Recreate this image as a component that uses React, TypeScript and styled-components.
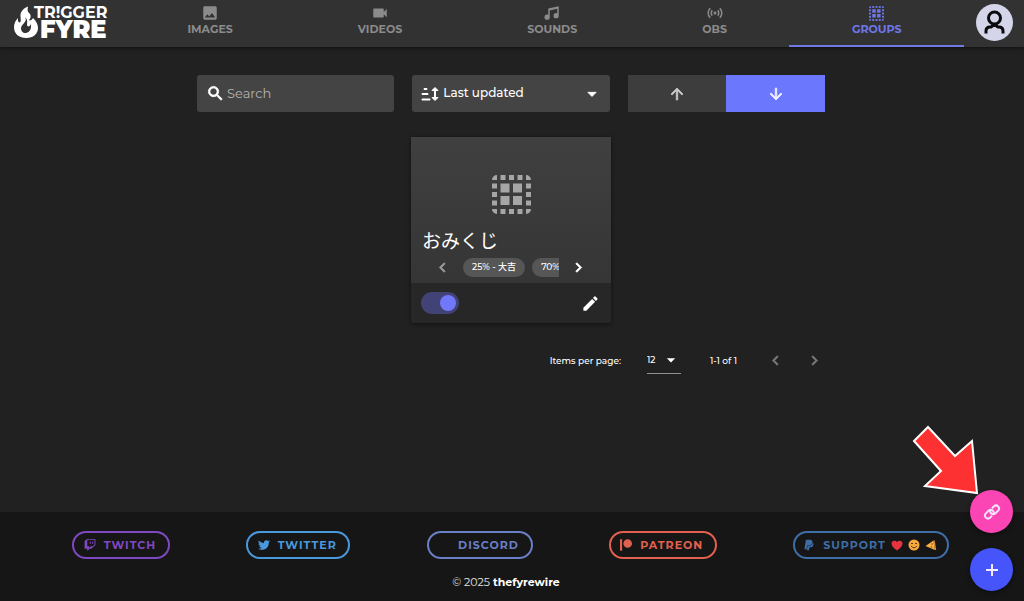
import React from "react";
import styled, { createGlobalStyle, css } from "styled-components";
import { FaTwitch, FaTwitter, FaPatreon, FaPaypal } from "react-icons/fa";
import {
  MdImage,
  MdVideocam,
  MdSensors,
  MdSearch,
  MdArrowUpward,
  MdArrowDownward,
  MdArrowDropDown,
  MdChevronLeft,
  MdChevronRight,
  MdEdit,
  MdAdd,
} from "react-icons/md";

const GlobalStyle = createGlobalStyle`
  * { box-sizing: border-box; }
  body {
    margin: 0;
    background: #212121;
    color: #fff;
    font-family: Montserrat, Inter, "Noto Sans CJK JP", sans-serif;
    font-size: 12px;
  }
  button, input, select { font: inherit; color: inherit; border: 0; margin: 0; }
  button { cursor: pointer; padding: 0; background: none; }
  a { text-decoration: none; color: inherit; }
`;

const heavyGlyph = css`
  path:not([fill="none"]) {
    stroke: currentColor;
    stroke-width: 1px;
  }
`;

const Page = styled.div`
  min-height: 100vh;
  display: flex;
  flex-direction: column;
`;

const Header = styled.header`
  display: flex;
  height: 47px;
  background: #323232;
  box-shadow: 0 1px 4px rgba(0, 0, 0, 0.6);
`;

const Logo = styled.a`
  width: 125px;
  padding: 4px 0 0 13px;
`;

const Tabs = styled.nav`
  flex: 1;
  display: flex;
`;

const Tab = styled.a<{ $active?: boolean }>`
  flex: 1 1 auto;
  display: flex;
  flex-direction: column;
  align-items: center;
  padding-top: 4px;
  font-size: 11px;
  line-height: 14px;
  font-weight: 700;
  color: ${(p) => (p.$active ? "#6f76e8" : "#8b8b8b")};
  border-bottom: 2px solid ${(p) => (p.$active ? "#6f79e6" : "transparent")};
`;

const TabIcon = styled.span<{ $small?: boolean }>`
  display: flex;
  align-items: center;
  justify-content: center;
  width: 18px;
  height: 18px;
  svg { width: ${(p) => (p.$small ? 15 : 18)}px; height: ${(p) => (p.$small ? 15 : 18)}px; }
`;

const AvatarButton = styled.button`
  width: 60px;
  display: flex;
  justify-content: center;
  padding-top: 4px;
`;

const Main = styled.main`
  flex: 1;
  padding: 28px 18px 24px 16px;
`;

const Content = styled.div`
  max-width: 628px;
  margin: 0 auto;
`;

const Controls = styled.div`
  display: grid;
  grid-template-columns: repeat(3, minmax(0, 1fr));
  gap: 18px;
  height: 37px;
`;

const Field = styled.label`
  position: relative;
  display: flex;
  align-items: center;
  background: #444;
  border-radius: 3px;
  padding-left: 9px;
  ${heavyGlyph}
`;

const SearchInput = styled.input`
  flex: 1;
  min-width: 0;
  height: 100%;
  padding: 0 3px 2px 2px;
  background: transparent;
  outline: none;
  font-size: 13px;
  &::placeholder { color: #b4b4b4; opacity: 1; }
`;

const SortSelect = styled.select`
  flex: 1;
  min-width: 0;
  height: 100%;
  padding: 0 28px 2px 4px;
  background: transparent;
  appearance: none;
  outline: none;
  font-weight: 500;
`;

const Caret = styled(MdArrowDropDown)<{ $inset: number }>`
  position: absolute;
  right: ${(p) => p.$inset}px;
  width: 20px;
  height: 20px;
  pointer-events: none;
`;

const Direction = styled.div`
  display: flex;
`;

const DirectionButton = styled.button<{ $on?: boolean }>`
  flex: 1;
  display: flex;
  align-items: center;
  justify-content: center;
  background: ${(p) => (p.$on ? "#6b77fd" : "#3d3d3d")};
  color: ${(p) => (p.$on ? "#f0f0ff" : "#c9c9c9")};
  svg { width: 18px; height: 18px; }
  ${heavyGlyph}
`;

const Card = styled.article`
  width: 200px;
  margin: 25px auto 0;
  border-radius: 2px;
  background: #272727;
  box-shadow: 0 1px 4px rgba(0, 0, 0, 0.5);
`;

const CardMedia = styled.div`
  display: flex;
  flex-direction: column;
  height: 146px;
  padding-top: 38px;
  background: linear-gradient(#404040, #353535);
`;

const CardIcon = styled.div`
  display: flex;
  justify-content: center;
  height: 39px;
  color: #a6a6a6;
  svg { width: 39px; height: 39px; }
`;

const CardTitle = styled.h2`
  margin: 13px 0 0;
  padding-left: 11px;
  font: 400 19px/26px "Noto Sans CJK JP", sans-serif;
`;

const ChipRow = styled.div`
  display: flex;
  align-items: center;
  margin-top: 5px;
  padding: 0 23px 0 22px;
`;

const ChevronButton = styled.button<{ $dim?: boolean }>`
  display: flex;
  color: ${(p) => (p.$dim ? "#999" : "#fff")};
  svg { width: 19px; height: 19px; }
  ${heavyGlyph}
`;

const Chips = styled.div`
  flex: 1;
  display: flex;
  gap: 7px;
  margin: 0 10px 0 11px;
  overflow: hidden;
`;

const Chip = styled.span`
  flex: none;
  height: 19px;
  padding: 0 9px;
  border-radius: 10px;
  background: #565656;
  font-size: 9px;
  line-height: 18px;
  font-weight: 500;
  white-space: nowrap;
`;

const CardActions = styled.div`
  display: flex;
  align-items: center;
  justify-content: space-between;
  height: 40px;
  padding: 0 11px 0 10px;
`;

const Toggle = styled.input`
  appearance: none;
  width: 38px;
  height: 22px;
  margin: 0;
  padding: 3px;
  border-radius: 11px;
  background: #414275;
  display: flex;
  &::before {
    content: "";
    width: 16px;
    height: 16px;
    border-radius: 50%;
    background: #7278fa;
  }
  &:checked { justify-content: flex-end; }
`;

const EditButton = styled.button`
  display: flex;
  svg { width: 19px; height: 19px; }
`;

const Paginator = styled.div`
  display: flex;
  align-items: center;
  justify-content: flex-end;
  height: 28px;
  margin-top: 23px;
  font-size: 9px;
  font-weight: 500;
`;

const PageSize = styled.label`
  display: flex;
  align-items: center;
  gap: 26px;
`;

const PageSizeBox = styled.span`
  position: relative;
  display: flex;
  align-items: center;
  width: 34px;
  height: 28px;
  border-bottom: 1px solid #909090;
`;

const PageSizeSelect = styled.select`
  width: 100%;
  height: 28px;
  padding: 0;
  background: transparent;
  appearance: none;
  outline: none;
`;

const Range = styled.span`
  width: 28px;
  margin: 0 28px 0 29px;
  white-space: nowrap;
`;

const PagerButtons = styled.div`
  display: flex;
  gap: 20px;
  margin-right: 1px;
  svg { color: #777; }
`;

const Footer = styled.footer`
  height: 89px;
  padding: 19px 75px 0 72px;
  background: #161616;
`;

const Links = styled.div`
  display: flex;
  justify-content: space-between;
`;

const Pill = styled.a<{ $color: string; $width: number }>`
  display: flex;
  align-items: center;
  justify-content: center;
  gap: 8px;
  min-width: ${(p) => p.$width}px;
  height: 28px;
  padding-right: 2px;
  border: 2px solid ${(p) => p.$color};
  border-radius: 14px;
  color: ${(p) => p.$color};
  font-size: 11px;
  font-weight: 700;
  letter-spacing: 1px;
  white-space: nowrap;
  > svg { width: 12px; height: 12px; }
`;

const BlankIcon = styled.span`
  width: 12px;
`;

const Emojis = styled.span`
  display: flex;
  gap: 5px;
  margin-left: -3px;
  svg { width: 12px; height: 12px; }
`;

const Copyright = styled.p`
  margin: 15px 9px 0 0;
  text-align: center;
  font-size: 11px;
  line-height: 16px;
  color: #e4e4e4;
  a { font-weight: 700; color: #fff; }
`;

const FloatingActions = styled.div`
  position: fixed;
  right: 11px;
  bottom: 10px;
  display: flex;
  flex-direction: column;
  gap: 15px;
`;

const Fab = styled.button<{ $color: string }>`
  display: flex;
  align-items: center;
  justify-content: center;
  width: 43px;
  height: 43px;
  border-radius: 50%;
  background: ${(p) => p.$color};
  color: #f4eaff;
  box-shadow: 0 2px 5px rgba(0, 0, 0, 0.4);
  svg { width: 18px; height: 18px; }
`;

const Pointer = styled.svg`
  position: fixed;
  right: 43px;
  bottom: 103px;
  width: 72px;
  height: 74px;
  pointer-events: none;
`;

const logoText = css`
  font-family: Montserrat, Inter, sans-serif;
  fill: #fff;
`;

const LogoTop = styled.text`
  ${logoText}
  font-size: 16px;
  font-weight: 700;
`;

const LogoBottom = styled.text`
  ${logoText}
  font-size: 24px;
  font-weight: 900;
`;

function LogoMark() {
  return (
    <svg width="100" height="43" viewBox="0 0 100 43" role="img" aria-label="Trigger Fyre">
      <path
        fill="#fff"
        fillRule="evenodd"
        d="M15 2.500C14 7 15 8 17 10C18 12 18 14 16 16C17 17 19 16 20 14C23 17 25 20 25 24C25 30 20 34 13.500 34C6 34 1 30 1 23C1 19 3 16 5 14C4.500 17 5.500 18.500 7 18.500C9 17 6.500 12 8 8.500C9.500 5.500 12 3.500 15 2.500ZM12 13C15 18 9 19 8 24C8 28 11 29.500 13 29C17 28 18.500 25 18 20C17 22 16 23 14.500 22C13 20 16 17 12 13Z"
      />
      <LogoTop x="21" y="14">TR!GGER</LogoTop>
      <LogoBottom x="27" y="34">FYRE</LogoBottom>
    </svg>
  );
}

function MusicIcon() {
  return (
    <svg viewBox="0 0 24 24" fill="currentColor" aria-hidden="true">
      <path d="M21,3V15.500A3.500,3.500 0 0,1 17.500,19A3.500,3.500 0 0,1 14,15.500A3.500,3.500 0 0,1 17.500,12C18.040,12 18.550,12.120 19,12.340V6.470L9,8.600V17.500A3.500,3.500 0 0,1 5.500,21A3.500,3.500 0 0,1 2,17.500A3.500,3.500 0 0,1 5.500,14C6.040,14 6.550,14.120 7,14.340V6L21,3Z" />
    </svg>
  );
}

function GroupIcon() {
  const steps = [0, 8.5, 17, 25.5, 34];
  const border = steps.flatMap((x, i) =>
    steps.filter((_, j) => i === 0 || i === 4 || j === 0 || j === 4).map((y) => [x, y])
  );
  return (
    <svg viewBox="0 0 39 39" fill="currentColor" aria-hidden="true">
      {border
        .filter(([x, y]) => !((x === 0 || x === 34) && (y === 0 || y === 34)))
        .map(([x, y]) => (
          <rect key={`${x}-${y}`} x={x} y={y} width="5" height="5" />
        ))}
      <path d="M0 5A5 5 0 0 1 5 0V5ZM34 0A5 5 0 0 1 39 5H34ZM0 34H5V39A5 5 0 0 1 0 34ZM34 34H39A5 5 0 0 1 34 39Z" />
      <path d="M8.500 8.500H17.500V17.500H8.500ZM21 8.500H30V17.500H21ZM8.500 21H17.500V30H8.500ZM21 21H30V30H21Z" />
    </svg>
  );
}

function SortIcon() {
  return (
    <svg width="18" height="16" viewBox="0 0 18 16" aria-hidden="true">
      <path
        fill="currentColor"
        d="M3 2.500H6V3.500H3ZM1 7.500H7V8.500H1ZM1 13H9V14H1ZM14 1.500L17 4.500H14.500V11.500H17L14 14.500L11 11.500H13.500V4.500H11Z"
      />
    </svg>
  );
}

function Avatar() {
  return (
    <svg width="37" height="37" viewBox="0 0 37 37" aria-hidden="true">
      <circle cx="18.5" cy="18.5" r="18.5" fill="#d5d5ea" />
      <g fill="none" stroke="#0b0b0d" strokeWidth="3">
        <circle cx="18.5" cy="14" r="6" />
        <path d="M10 29.500V27C10 24.500 11.500 23 14 23H15L18.500 20.500L22 23H23C25.500 23 27 24.500 27 27V29.500" />
      </g>
    </svg>
  );
}

function LinkIcon() {
  return (
    <svg viewBox="0 0 24 24" fill="none" stroke="currentColor" strokeWidth="2.6" strokeLinecap="round" aria-hidden="true">
      <g transform="rotate(-45 12 12)">
        <path d="M7.500 15.500H5A4 4 0 0 1 5 7.500H10.500A4 4 0 0 1 12 15" />
        <path d="M16.500 8.500H19A4 4 0 0 1 19 16.500H13.500A4 4 0 0 1 12 9" />
      </g>
    </svg>
  );
}

function PlusIcon() {
  return (
    <svg viewBox="0 0 18 18" aria-hidden="true">
      <path d="M9 3V15M3 9H15" stroke="currentColor" strokeWidth="2" />
    </svg>
  );
}

function Heart() {
  return (
    <svg viewBox="0 0 12 12" aria-hidden="true">
      <path fill="#e83440" d="M6 11.500C2.500 9 0.500 7 0.500 4.500C0.500 1.500 4.600 1 6 3.300C7.400 1 11.500 1.500 11.500 4.500C11.500 7 9.500 9 6 11.500Z" />
    </svg>
  );
}

function Smile() {
  return (
    <svg viewBox="0 0 12 12" aria-hidden="true">
      <circle cx="6" cy="6" r="5.500" fill="#f6a93b" />
      <path d="M3 4.800Q4 3.600 5 4.800M7 4.800Q8 3.600 9 4.800M3 7Q6 10.500 9 7" fill="none" stroke="#5c3a1a" />
    </svg>
  );
}

function Pizza() {
  return (
    <svg viewBox="0 0 12 12" aria-hidden="true">
      <path fill="#f8b145" d="M0.500 7L8.500 1.500L10 11Z" />
      <path d="M9 1.500L10.500 11" stroke="#d58a35" strokeWidth="1.500" />
      <circle cx="7" cy="5" r="0.8" fill="#a43d20" />
      <circle cx="6.500" cy="8" r="0.8" fill="#a43d20" />
    </svg>
  );
}

const tabs = [
  { label: "IMAGES", icon: <MdImage /> },
  { label: "VIDEOS", icon: <MdVideocam /> },
  { label: "SOUNDS", icon: <MusicIcon /> },
  { label: "OBS", icon: <MdSensors /> },
  { label: "GROUPS", icon: <GroupIcon />, active: true },
];

const links = [
  { label: "TWITCH", color: "#7f48c2", width: 98, icon: <FaTwitch /> },
  { label: "TWITTER", color: "#4a98dc", width: 104, icon: <FaTwitter /> },
  { label: "DISCORD", color: "#6a7fc6", width: 106, icon: <BlankIcon /> },
  { label: "PATREON", color: "#e2604f", width: 108, icon: <FaPatreon /> },
];

export default function App() {
  return (
    <Page>
      <GlobalStyle />
      <Header>
        <Logo href="#home">
          <LogoMark />
        </Logo>
        <Tabs>
          {tabs.map((t) => (
            <Tab key={t.label} href={`#${t.label.toLowerCase()}`} $active={t.active}>
              <TabIcon $small={t.active}>{t.icon}</TabIcon>
              {t.label}
            </Tab>
          ))}
        </Tabs>
        <AvatarButton aria-label="Account">
          <Avatar />
        </AvatarButton>
      </Header>

      <Main>
        <Content>
          <Controls>
            <Field>
              <MdSearch size={19} aria-hidden="true" />
              <SearchInput type="text" placeholder="Search" aria-label="Search" />
            </Field>
            <Field>
              <SortIcon />
              <SortSelect aria-label="Sort by" defaultValue="updated">
                <option value="updated">Last updated</option>
              </SortSelect>
              <Caret $inset={8} />
            </Field>
            <Direction>
              <DirectionButton aria-label="Ascending">
                <MdArrowUpward />
              </DirectionButton>
              <DirectionButton $on aria-label="Descending">
                <MdArrowDownward />
              </DirectionButton>
            </Direction>
          </Controls>

          <Card>
            <CardMedia>
              <CardIcon>
                <GroupIcon />
              </CardIcon>
              <CardTitle>おみくじ</CardTitle>
              <ChipRow>
                <ChevronButton $dim aria-label="Previous items">
                  <MdChevronLeft />
                </ChevronButton>
                <Chips>
                  <Chip>25% - 大吉</Chip>
                  <Chip>70%</Chip>
                </Chips>
                <ChevronButton aria-label="Next items">
                  <MdChevronRight />
                </ChevronButton>
              </ChipRow>
            </CardMedia>
            <CardActions>
              <Toggle type="checkbox" role="switch" aria-label="Enabled" defaultChecked />
              <EditButton aria-label="Edit">
                <MdEdit />
              </EditButton>
            </CardActions>
          </Card>

          <Paginator>
            <PageSize>
              Items per page:
              <PageSizeBox>
                <PageSizeSelect defaultValue="12">
                  <option>12</option>
                </PageSizeSelect>
                <Caret $inset={0} />
              </PageSizeBox>
            </PageSize>
            <Range>1-1 of 1</Range>
            <PagerButtons>
              <ChevronButton aria-label="Previous page">
                <MdChevronLeft />
              </ChevronButton>
              <ChevronButton aria-label="Next page">
                <MdChevronRight />
              </ChevronButton>
            </PagerButtons>
          </Paginator>
        </Content>
      </Main>

      <Footer>
        <Links>
          {links.map((l) => (
            <Pill key={l.label} href={`#${l.label.toLowerCase()}`} $color={l.color} $width={l.width}>
              {l.icon}
              {l.label}
            </Pill>
          ))}
          <Pill href="#support" $color="#3f6ea6" $width={156}>
            <FaPaypal />
            SUPPORT
            <Emojis>
              <Heart />
              <Smile />
              <Pizza />
            </Emojis>
          </Pill>
        </Links>
        <Copyright>
          © 2025 <a href="#thefyrewire">thefyrewire</a>
        </Copyright>
      </Footer>

      <FloatingActions>
        <Fab $color="#fb45b4" aria-label="Copy link">
          <LinkIcon />
        </Fab>
        <Fab $color="#4655fa" aria-label="Add">
          <PlusIcon />
        </Fab>
      </FloatingActions>
      <Pointer viewBox="0 0 72 74" aria-hidden="true">
        <path
          d="M5 17L19 3L46 32L63 17L68 69L16 62L32 47Z"
          fill="#fd3131"
          stroke="#fff"
          strokeWidth="2"
        />
      </Pointer>
    </Page>
  );
}
